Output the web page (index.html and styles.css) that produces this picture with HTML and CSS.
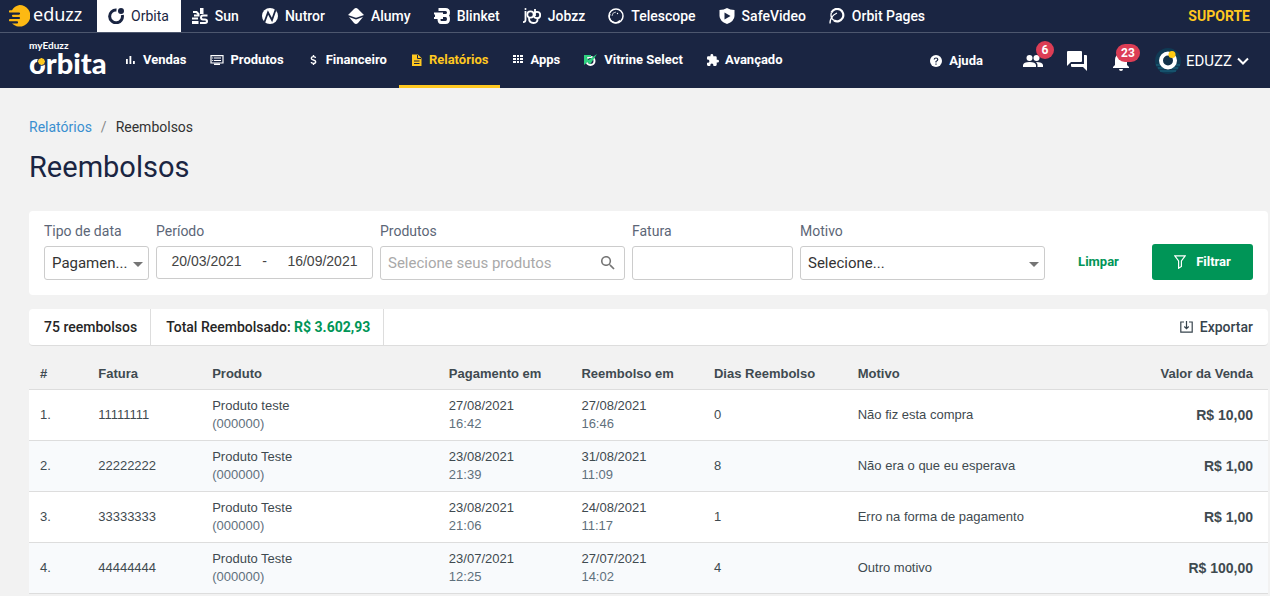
FILE: index.html
```html
<!DOCTYPE html>
<html lang="pt-BR">
<head>
<meta charset="utf-8">
<title>Reembolsos</title>
<link rel="stylesheet" href="styles.css">
</head>
<body>
<header class="header">
  <div class="topbar">
    <a class="brand" href="#">
      <svg class="brand-icon" viewBox="0 0 21 22"><path fill="#fdb913" d="M10.500 0a10.800 10.800 0 1 1-7.500 18.500H8a1 1 0 0 0 0-2.200H1a1 1 0 0 1 0-2.200h9a1 1 0 0 0 0-2.200H4a1 1 0 0 1 0-2.200h6a1 1 0 0 0 0-2.200H1a1 1 0 0 1 0-2.200h2A10.500 10.500 0 0 1 10.500 0z"/></svg>
      <span>eduzz</span>
    </a>
    <nav class="products">
      <a class="product product-active" href="#"><svg class="icon16" viewBox="0 0 16 16"><path fill="none" stroke="currentColor" stroke-width="3" d="M8.500 2A6.400 6.400 0 1 0 14.300 7"/><circle cx="13" cy="3" r="3" fill="currentColor"/></svg>Orbita</a>
      <a class="product" href="#"><svg class="icon16" viewBox="0 0 16 16"><path fill="currentColor" d="M8 0h3.500v6H8zM0 13h6.500v3H0z"/><path fill="none" stroke="currentColor" stroke-width="2" d="M1 4h3.500l2 2v1.500H2M0 10.500h6M15.500 7.500h-4.500q-2 0-2 2t2 2h2q2 0 2 1.700t-2 1.800H8"/></svg>Sun</a>
      <a class="product" href="#"><svg class="icon16" viewBox="0 0 16 16"><circle cx="8" cy="8" r="8" fill="currentColor"/><path fill="none" stroke="#1a2542" stroke-width="1.800" d="M2.500 14L6 4.500l4 7.500L13.500 2"/></svg>Nutror</a>
      <a class="product" href="#"><svg class="icon16" viewBox="0 0 16 16"><path fill="currentColor" d="M8 0q1 0 2 1l6 6-7 2.500q-1 .3-2 0L0 7l6-6Q7 0 8 0zM1 9l7 2.500L15 9l-5 6q-2 2-4 0z"/></svg>Alumy</a>
      <a class="product" href="#"><svg class="icon16" viewBox="0 0 16 16"><path fill="none" stroke="currentColor" stroke-width="3" d="M4.500 1.500h7q3 0 3 3T11.500 7.500H7M11.500 7.500q3 0 3 3.500t-3 3.500H7Q5 14.500 5 11"/><path fill="currentColor" d="M0 4.500h9v2H0zM1 6.500h9v2.500H1zM0 9h9v2H0z"/></svg>Blinket</a>
      <a class="product" href="#"><svg class="icon18" viewBox="0 0 18 16"><g fill="none" stroke="currentColor" stroke-width="1.800"><path d="M2.500 3v9q0 2-2.500 2.200M12 1v7"/><circle cx="7.500" cy="6.500" r="3.200"/><circle cx="14" cy="7" r="3.200"/><path d="M6 10q0 5 4.500 5t4-5"/></g><circle cx="2.500" cy="1" r="1" fill="currentColor"/></svg>Jobzz</a>
      <a class="product" href="#"><svg class="icon16" viewBox="0 0 16 16"><g fill="none" stroke="currentColor"><circle cx="8" cy="8" r="7" stroke-width="1.500"/><path stroke-width="1.500" d="M2 6a6 6 0 0 0 10 6.500"/><path stroke-width=".7" d="M4 8a4.200 4.200 0 0 1 4-4"/></g><circle cx="9.500" cy="5.500" r=".7" fill="currentColor"/></svg>Telescope</a>
      <a class="product" href="#"><svg class="icon16" viewBox="0 0 16 16"><path fill="currentColor" d="M8 0q3 2 7.500 2v6q0 5-7.500 8Q.5 13 .5 8V2Q5 2 8 0z"/><path fill="#1a2542" d="M5.500 4.500l6 3.500-6 3.500z"/></svg>SafeVideo</a>
      <a class="product" href="#"><svg class="icon16" viewBox="0 0 16 16"><g fill="none" stroke="currentColor"><path stroke-width="2.200" d="M5 12.500a6.200 6.200 0 1 0-2.500-8"/><path stroke-width="1.300" d="M2.500 4.500A7 7 0 0 0 5 12.500M1 15.500Q1 8 8 5M1 15q0-4 2.500-6"/></g></svg>Orbit Pages</a>
    </nav>
    <a class="support" href="#">SUPORTE</a>
  </div>
  <div class="navbar">
    <a class="logo" href="#">
      <span class="logo-small">myEduzz</span>
      <span class="logo-name">orbita<i class="logo-dot"></i></span>
    </a>
    <nav class="menu">
      <a class="menu-item" href="#"><svg class="icon12" viewBox="0 0 12 12"><path fill="currentColor" d="M1 5h1.800v5H1zM4.500 2h1.800v8H4.500zM8 7h1.800v3H8z"/></svg>Vendas</a>
      <a class="menu-item" href="#"><svg class="icon14" viewBox="0 0 14 12"><g fill="none" stroke="currentColor" stroke-width="1.200"><path d="M1 1.600h12v7.400H1zM4 4h7M4 6.500h7M2.200 4h1M2.200 6.500h1M4 10.400h6"/></g></svg>Produtos</a>
      <a class="menu-item" href="#"><svg class="icon12" viewBox="0 0 12 12"><path fill="none" stroke="currentColor" stroke-width="1.400" d="M7.500 4Q7.500 2.600 5.500 2.600T3.300 4.200Q3.300 5.500 5.500 6t2.200 1.800Q7.700 9.400 5.500 9.400T3.200 8M5.500 1v1.500M5.500 9.500V11"/></svg>Financeiro</a>
      <a class="menu-item menu-item-active" href="#"><svg class="icon12" viewBox="0 0 12 12"><path fill="currentColor" d="M1 .5h6l3.500 3.500v8H1z"/><path stroke="#1a2542" stroke-width="1" fill="none" d="M6.500 1v3.500H10M3 7h5.500M3 9.500h5.500"/></svg>Relatórios</a>
      <a class="menu-item" href="#"><svg class="icon12" viewBox="0 0 12 12"><path fill="currentColor" d="M1 1h3v2H1zM5 1h2v2H5zM8 1h3v2H8zM1 4h3v2H1zM5 4h2v2H5zM8 4h3v2H8zM1 7h3v2H1zM5 7h2v2H5zM8 7h3v2H8z"/></svg>Apps</a>
      <a class="menu-item" href="#"><svg class="icon14" viewBox="0 0 14 12"><circle cx="6.500" cy="7" r="4" fill="none" stroke="#fff" stroke-width="2"/><path fill="#2fd07f" d="M0 1h7v2H2.500l2 3L13 0 6 10.500 3.500 8 0 11z"/></svg>Vitrine Select</a>
      <a class="menu-item" href="#"><svg class="icon12" viewBox="2 1 21 21"><path fill="currentColor" d="M20.500 11H19V7a2 2 0 0 0-2-2h-4V3.500a2.500 2.500 0 0 0-5 0V5H4a2 2 0 0 0-2 2v3.800h1.500a2.700 2.700 0 0 1 0 5.400H2V20a2 2 0 0 0 2 2h3.800v-1.500a2.700 2.700 0 0 1 5.400 0V22H17a2 2 0 0 0 2-2v-4h1.500a2.500 2.500 0 0 0 0-5z"/></svg>Avançado</a>
    </nav>
    <div class="tools">
      <a class="help" href="#"><svg class="icon12" viewBox="0 0 12 12"><circle cx="6" cy="6" r="6" fill="currentColor"/><path fill="none" stroke="#1a2542" stroke-width="1.200" d="M4.200 4.500Q4.300 3 6 3t1.800 1.500Q7.800 5.500 6 6.500v1M6 8.500v1.200"/></svg>Ajuda</a>
      <button class="tool" type="button" aria-label="Contatos"><svg class="icon20" viewBox="0 0 20 20"><g fill="currentColor"><circle cx="6.500" cy="7" r="3"/><circle cx="13.500" cy="7" r="3"/><path d="M0 16v-2q.5-3 6.500-3T13 14v2zM14.500 16v-2q0-1.700-1.500-3 6.500 0 7 3v2z"/></g></svg><span class="badge">6</span></button>
      <button class="tool" type="button" aria-label="Mensagens"><svg class="icon20" viewBox="2 2 20 20"><path fill="currentColor" d="M21 6h-2v9H6v2a1 1 0 0 0 1 1h11l4 4V7a1 1 0 0 0-1-1zm-4 6V3a1 1 0 0 0-1-1H3a1 1 0 0 0-1 1v14l4-4h10a1 1 0 0 0 1-1z"/></svg></button>
      <button class="tool" type="button" aria-label="Notificações"><svg class="icon20" viewBox="2 2 20 20"><path fill="currentColor" d="M12 22a2 2 0 0 0 2-2h-4a2 2 0 0 0 2 2zm6-6v-5c0-3-1.600-5.600-4.500-6.300V4a1.500 1.500 0 0 0-3 0v.7C7.600 5.400 6 7.900 6 11v5l-2 2v1h16v-1z"/></svg><span class="badge badge-wide">23</span></button>
      <button class="account" type="button"><svg class="avatar" viewBox="0 0 26 26"><circle cx="13" cy="13" r="13" fill="#103a54"/><path fill="none" stroke="#1d6b84" d="M1 17h24M3 20h20M5 23h16"/><circle cx="13" cy="12.500" r="7" fill="#123149" stroke="#fff" stroke-width="4"/><circle cx="17" cy="6.500" r="3.500" fill="#fc1"/></svg>EDUZZ<svg class="icon12" viewBox="0 0 12 12"><path fill="none" stroke="currentColor" stroke-width="2" d="M1 3.500l5 5 5-5"/></svg></button>
    </div>
  </div>
</header>

<main class="page">
  <nav class="breadcrumb"><a href="#">Relatórios</a><span class="slash">/</span><span>Reembolsos</span></nav>
  <h1 class="title">Reembolsos</h1>

  <form class="filters">
    <div class="field">
      <label for="tipo">Tipo de data</label>
      <div class="control"><select id="tipo"><option>Pagamen...</option></select><svg class="caret" viewBox="0 0 10 5"><path fill="#757575" d="M0 0h10L5 5z"/></svg></div>
    </div>
    <div class="field">
      <label for="inicio">Período</label>
      <div class="control period"><input id="inicio" type="text" value="20/03/2021"><span>-</span><input type="text" value="16/09/2021" aria-label="Fim do período"></div>
    </div>
    <div class="field">
      <label for="produtos">Produtos</label>
      <div class="control"><input id="produtos" type="text" placeholder="Selecione seus produtos"><svg class="search" viewBox="3 3 18 18"><path fill="#757575" d="M15.500 14h-.8l-.3-.3a6.500 6.500 0 1 0-.7.700l.3.300v.8l5 5 1.500-1.500zm-6 0a4.500 4.500 0 1 1 0-9 4.500 4.500 0 0 1 0 9z"/></svg></div>
    </div>
    <div class="field">
      <label for="fatura">Fatura</label>
      <div class="control"><input id="fatura" type="text"></div>
    </div>
    <div class="field">
      <label for="motivo">Motivo</label>
      <div class="control"><select id="motivo"><option>Selecione...</option></select><svg class="caret" viewBox="0 0 10 5"><path fill="#757575" d="M0 0h10L5 5z"/></svg></div>
    </div>
    <div class="actions">
      <button class="clear" type="reset">Limpar</button>
      <button class="submit" type="submit"><svg class="funnel" viewBox="0 0 12 14"><path fill="none" stroke="currentColor" stroke-width="1.200" d="M.8.800h10.400L7.400 6v5.500L4.600 13.200V6z"/></svg>Filtrar</button>
    </div>
  </form>

  <section class="summary">
    <div class="stat">75 reembolsos</div>
    <div class="stat">Total Reembolsado: <strong>R$ 3.602,93</strong></div>
    <button class="export" type="button"><svg class="export-icon" viewBox="0 0 13 12"><path fill="none" stroke="currentColor" stroke-width="1.200" d="M4 1H.8v10.200h11.400V1H9M6.500 0v7.500M4.300 5.500l2.200 2.200 2.200-2.200"/></svg>Exportar</button>
  </section>

  <table class="refunds">
    <colgroup><col class="c-num"><col class="c-invoice"><col class="c-product"><col class="c-date"><col class="c-date"><col class="c-days"><col class="c-reason"><col></colgroup>
    <thead>
      <tr><th>#</th><th>Fatura</th><th>Produto</th><th>Pagamento em</th><th>Reembolso em</th><th>Dias Reembolso</th><th>Motivo</th><th class="amount">Valor da Venda</th></tr>
    </thead>
    <tbody>
      <tr><td>1.</td><td>11111111</td><td>Produto teste<small>(000000)</small></td><td>27/08/2021<small>16:42</small></td><td>27/08/2021<small>16:46</small></td><td>0</td><td>Não fiz esta compra</td><td class="amount">R$ 10,00</td></tr>
      <tr><td>2.</td><td>22222222</td><td>Produto Teste<small>(000000)</small></td><td>23/08/2021<small>21:39</small></td><td>31/08/2021<small>11:09</small></td><td>8</td><td>Não era o que eu esperava</td><td class="amount">R$ 1,00</td></tr>
      <tr><td>3.</td><td>33333333</td><td>Produto Teste<small>(000000)</small></td><td>23/08/2021<small>21:06</small></td><td>24/08/2021<small>11:17</small></td><td>1</td><td>Erro na forma de pagamento</td><td class="amount">R$ 1,00</td></tr>
      <tr><td>4.</td><td>44444444</td><td>Produto Teste<small>(000000)</small></td><td>23/07/2021<small>12:25</small></td><td>27/07/2021<small>14:02</small></td><td>4</td><td>Outro motivo</td><td class="amount">R$ 100,00</td></tr>
    </tbody>
  </table>
</main>
</body>
</html>
```
FILE: styles.css
```css
* { box-sizing: border-box; }
body { margin: 0; background: #f2f2f2; color: #333; font: 14px/16px Roboto, sans-serif; }
a { color: inherit; text-decoration: none; }
button, input, select { font: inherit; color: inherit; }
button { border: 0; padding: 0; background: none; cursor: pointer; }
svg { flex: none; display: block; }

.icon12 { width: 12px; height: 12px; }
.icon14 { width: 14px; height: 12px; }
.icon16 { width: 16px; height: 16px; }
.icon18 { width: 18px; height: 16px; }
.icon20 { width: 20px; height: 20px; }

.header { background: #1a2542; color: #fff; }
.topbar { display: flex; height: 33px; border-bottom: 1px solid #4d576e; }
.brand { display: flex; align-items: center; gap: 3px; width: 97px; padding-left: 9px; font: 18px/24px "Noto Sans", sans-serif; }
.brand span { padding-bottom: 4px; }
.brand-icon { width: 21px; height: 22px; }
.products { display: flex; }
.product { display: flex; align-items: center; gap: 7px; padding: 0 12px 0 11px; font-weight: 500; }
.product-active { background: #fff; color: #1a2542; font-weight: 400; }
.support { display: flex; align-items: center; margin-left: auto; padding-right: 20px; color: #ffc820; font-weight: 700; }

.navbar { display: flex; height: 55px; padding: 0 21px 0 29px; font-size: 13px; }
.logo { display: flex; flex-direction: column; width: 84px; padding-top: 6px; font-family: Lato, sans-serif; font-weight: 700; }
.logo-small { font-size: 10px; line-height: 12px; }
.logo-name { position: relative; font-size: 29px; line-height: 24px; font-weight: 900; }
.logo-dot { position: absolute; left: 9px; top: 7px; width: 7px; height: 7px; border-radius: 50%; background: #ffc820; outline: 1px solid #1a2542; }
.menu { display: flex; font-weight: 700; }
.menu-item { display: flex; align-items: center; gap: 6px; padding: 2px 12px 0; border-bottom: 3px solid transparent; }
.menu-item-active { color: #ffc820; border-bottom-color: #ffc820; }
.tools { display: flex; align-items: center; margin-left: auto; }
.help { display: flex; align-items: center; gap: 7px; margin-right: 40px; font-weight: 700; }
.tool { position: relative; margin-right: 24px; }
.badge { position: absolute; left: 13px; top: -10px; width: 18px; border-radius: 9px; background: #dc3d55; color: #fff; font-size: 12px; line-height: 18px; font-weight: 700; }
.badge-wide { left: 5px; top: -7px; width: 24px; }
.account { display: flex; align-items: center; gap: 5px; font-size: 15px; }
.avatar { width: 26px; height: 26px; }

.page { padding: 31px 2px 0 29px; }
.breadcrumb { display: flex; gap: 9px; }
.breadcrumb a { color: #3a8fd0; }
.slash { color: #888; }
.title { margin: 12px 0 24px; color: #1a2542; font-size: 29px; line-height: 40px; font-weight: 400; }

.filters { display: grid; grid-template-columns: 105fr 217fr 245fr 161fr 245fr auto; gap: 7px; padding: 12px 15px 15px; border-radius: 4px; background: #fff; }
.field { min-width: 0; }
.field label { display: block; margin-bottom: 7px; color: #5c6677; }
.control { position: relative; height: 34px; border: 1px solid #ccc; border-radius: 3px; font-size: 15px; }
.control select, .control input { display: block; width: 100%; height: 100%; padding: 0 7px; border: 0; background: none; appearance: none; outline: 0; }
.control input::placeholder { color: #a9a9a9; opacity: 1; }
.caret { position: absolute; right: 5px; top: 15px; width: 10px; height: 5px; }
.search { position: absolute; right: 9px; top: 9px; width: 14px; height: 14px; }
.period { display: flex; align-items: center; height: 33px; padding: 0 0 3px; color: #444; font: 14px/16px "Liberation Sans", Arial, sans-serif; }
.control.period input { flex: 1; min-width: 0; padding: 0; text-align: center; }
.control.period input:first-child { padding-right: 6px; }
.control.period input:last-child { padding-left: 6px; }
.actions { display: flex; align-items: flex-end; gap: 7px; font-size: 13px; font-weight: 700; }
.clear, .submit { height: 36px; }
.clear { width: 93px; color: #009557; }
.submit { display: flex; align-items: center; justify-content: center; gap: 10px; width: 101px; border-radius: 3px; background: #009557; color: #fff; }
.funnel { width: 12px; height: 14px; }

.summary { display: flex; height: 37px; margin-top: 14px; border-bottom: 1px solid #ddd; border-radius: 4px; background: #fff; font-weight: 500; }
.stat { display: flex; align-items: center; padding: 0 13px 0 15px; border-right: 1px solid #ddd; white-space: pre; color: #262626; }
.stat strong { color: #009557; font-weight: 700; }
.export { display: flex; align-items: center; gap: 7px; margin-left: auto; padding-right: 15px; color: #37444d; font-weight: 500; }
.export-icon { width: 13px; height: 12px; }

.refunds { width: 100%; table-layout: fixed; border-collapse: separate; border-spacing: 0; color: #3f4a50; font: 13px/18px "Liberation Sans", Arial, sans-serif; }
.c-num { width: 4.7%; }
.c-invoice { width: 9.2%; }
.c-product { width: 19.1%; }
.c-date { width: 10.7%; }
.c-days { width: 11.6%; }
.c-reason { width: 20%; }
.refunds th, .refunds td { padding: 7px 11px; border-bottom: 1px solid #ddd; text-align: left; }
.refunds th { padding: 19px 11px 6px; }
.refunds td { background: #fff; }
.refunds tr:nth-child(even) td { background: #f8fafc; }
.refunds small { display: block; color: #5f707c; font-size: 13px; }
.refunds .amount { padding-right: 15px; text-align: right; font-weight: 700; }
.refunds td.amount { font-size: 14px; }
```
